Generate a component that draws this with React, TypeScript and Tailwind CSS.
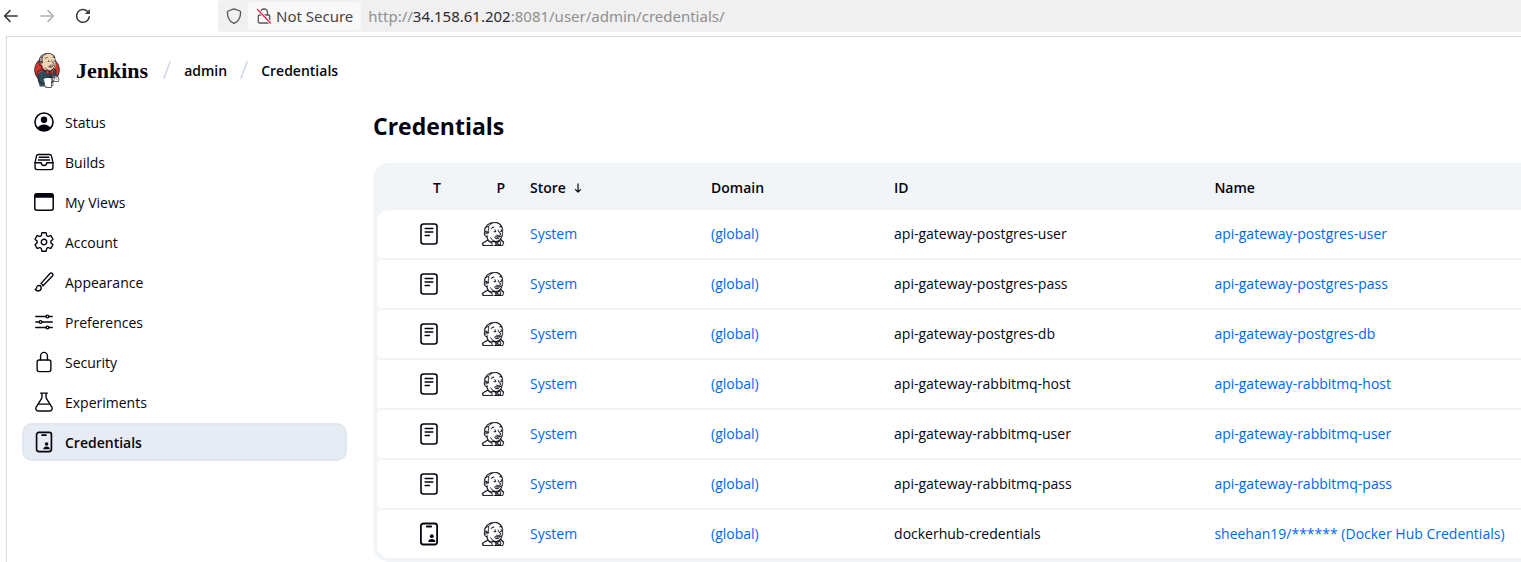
import type { ReactNode } from "react";
import { SiJenkins } from "react-icons/si";
import { DiJenkins } from "react-icons/di";
import {
  IoBrushOutline,
  IoFileTrayFullOutline,
  IoFlaskOutline,
  IoLockClosedOutline,
  IoOptionsOutline,
  IoSettingsOutline,
} from "react-icons/io5";

function BackIcon() {
  return (
    <svg width="16" height="16" viewBox="0 0 16 16" fill="none" stroke="#3a3a3e" strokeWidth="1.5" strokeLinecap="round" strokeLinejoin="round">
      <path d="M14.2 8H1.8M7 2.6 1.6 8 7 13.4" />
    </svg>
  );
}

function ForwardIcon() {
  return (
    <svg width="16" height="16" viewBox="0 0 16 16" fill="none" stroke="#b0b0b3" strokeWidth="1.5" strokeLinecap="round" strokeLinejoin="round">
      <path d="M1.8 8h12.4M9 2.6 14.4 8 9 13.4" />
    </svg>
  );
}

function ReloadIcon() {
  return (
    <svg width="16" height="16" viewBox="0 0 16 16" fill="none" stroke="#3a3a3e" strokeWidth="1.5" strokeLinecap="round">
      <path d="M14.3 8.8A6.4 6.4 0 1 1 12.4 3.3" />
      <path d="M14.9 1v4.6a.5.5 0 0 1-.5.5H9.8z" fill="#3a3a3e" stroke="none" />
    </svg>
  );
}

function ShieldIcon() {
  return (
    <svg width="16" height="16" viewBox="0 0 16 16" fill="none" stroke="#55555a" strokeWidth="1.3" strokeLinejoin="round">
      <path d="M8 .9 13.9 3a1 1 0 0 1 .7 1c0 5.5-1.8 9.3-6.1 11.2a1.2 1.2 0 0 1-1 0C3.2 13.3 1.4 9.5 1.4 4a1 1 0 0 1 .7-1z" />
    </svg>
  );
}

function InsecureIcon() {
  return (
    <svg width="16" height="16" viewBox="0 0 16 16" fill="none" strokeWidth="1.3" strokeLinecap="round">
      <path d="M4.5 7V4.5a3.5 3.5 0 0 1 7 0V7M3.5 7h9a1.2 1.2 0 0 1 1.2 1.2v5.6a1.2 1.2 0 0 1-1.2 1.2h-9a1.2 1.2 0 0 1-1.2-1.2V8.2A1.2 1.2 0 0 1 3.5 7z" stroke="#55555a" />
      <path d="M1.5 1.5 14.5 15" stroke="#f6f6f7" strokeWidth="3" />
      <path d="M1.5 1.5 14.5 15" stroke="#e22850" />
    </svg>
  );
}

function Mascot() {
  return (
    <span className="relative block size-[42px]">
      <svg className="absolute inset-0" width="42" height="42" viewBox="0 0 32 32">
        <circle cx="16" cy="16.2" r="9.5" fill="#d33833" />
        <path d="M8.7 19.5 13 16.2l9.5 0 1.5 4.5 1 3.3-5 1-.5 3.5H10.5L9 24z" fill="#335061" />
        <path d="M11.2 10.5C10.7 6 13.5 3.2 17 3.3c4.5 0 6 3.5 5.7 8-.2 3-1.5 5.7-5 5.5-2.7 0-4.7-1.8-5.2-4z" fill="#f0d6b7" />
        <path d="M11 11c-.6-3.5.6-6.3 3-7.3-1.3 1.6-1.5 3.6-1.3 6.3L12 12z" fill="#9a938c" />
        <path d="M15.5 16.2l2.5 1.2 2.7-1v3l-2.6-1-2.5 1z" fill="#d33833" />
        <path d="M13.2 22h6.4l-.4 7-4.7.5z" fill="#fff" />
        <path d="M20 21.3l3-.8 2.2.8-.4 2.8-3 .8-1.8-1z" fill="#fff" />
      </svg>
      <DiJenkins className="absolute inset-0 text-[#231f20]" size={42} />
    </span>
  );
}

function PersonIcon() {
  return (
    <svg width="22" height="22" viewBox="0 0 22 22">
      <circle cx="11" cy="11" r="9" fill="none" stroke="currentColor" strokeWidth="1.6" />
      <circle cx="11" cy="8.8" r="3.2" fill="currentColor" />
      <path d="M4.5 17.2c1.3-2.5 3.5-3.7 6.5-3.7s5.2 1.2 6.5 3.7a9 9 0 0 1-13 0z" fill="currentColor" />
    </svg>
  );
}

function WindowIcon() {
  return (
    <svg width="22" height="22" viewBox="0 0 22 22">
      <rect x="1.8" y="2.8" width="18.4" height="16.4" rx="2" fill="none" stroke="currentColor" strokeWidth="1.5" />
      <path d="M1.5 6.8V4.5a2 2 0 0 1 2-2h15a2 2 0 0 1 2 2v2.3z" fill="currentColor" />
    </svg>
  );
}

function BadgeIcon({ size = 22 }: { size?: number }) {
  return (
    <svg width={size} height={size} viewBox="0 0 24 24" fill="none" stroke="currentColor" strokeWidth="1.8" strokeLinecap="round">
      <rect x="3.9" y="1.5" width="16.2" height="21" rx="2.5" />
      <path d="M9.8 4.5h4.4" />
      <circle cx="14.8" cy="14.2" r="1.9" fill="currentColor" stroke="none" />
      <path d="M11.2 20c0-2 1.5-3.1 3.6-3.1s3.6 1.1 3.6 3.1z" fill="currentColor" stroke="none" />
    </svg>
  );
}

function SecretTextIcon() {
  return (
    <svg width="24" height="24" viewBox="0 0 24 24" fill="none" stroke="currentColor" strokeWidth="1.6" strokeLinecap="round">
      <rect x="4" y="2" width="16" height="20" rx="2.5" />
      <path d="M8.2 6.5h7.6M8.2 10h7.6M8.2 13.5h4.2" />
    </svg>
  );
}

function SortArrow() {
  return (
    <svg width="8" height="10" viewBox="0 0 8 10" fill="none" stroke="currentColor" strokeWidth="1.2" strokeLinecap="round" strokeLinejoin="round">
      <path d="M4 .8v8.2M1.5 6.7 4 9.2l2.5-2.5" />
    </svg>
  );
}

const tasks: { label: string; icon: ReactNode; active?: boolean }[] = [
  { label: "Status", icon: <PersonIcon /> },
  { label: "Builds", icon: <IoFileTrayFullOutline /> },
  { label: "My Views", icon: <WindowIcon /> },
  { label: "Account", icon: <IoSettingsOutline /> },
  { label: "Appearance", icon: <IoBrushOutline /> },
  { label: "Preferences", icon: <IoOptionsOutline /> },
  { label: "Security", icon: <IoLockClosedOutline /> },
  { label: "Experiments", icon: <IoFlaskOutline /> },
  { label: "Credentials", icon: <BadgeIcon />, active: true },
];

const credentials = [
  { id: "api-gateway-postgres-user", name: "api-gateway-postgres-user" },
  { id: "api-gateway-postgres-pass", name: "api-gateway-postgres-pass" },
  { id: "api-gateway-postgres-db", name: "api-gateway-postgres-db" },
  { id: "api-gateway-rabbitmq-host", name: "api-gateway-rabbitmq-host" },
  { id: "api-gateway-rabbitmq-user", name: "api-gateway-rabbitmq-user" },
  { id: "api-gateway-rabbitmq-pass", name: "api-gateway-rabbitmq-pass" },
  { id: "dockerhub-credentials", name: "sheehan19/****** (Docker Hub Credentials)", userPass: true },
];

function BrowserBar() {
  return (
    <div className="flex h-8 items-center bg-white font-['Noto_Sans',sans-serif] text-[15px]">
      <div className="flex w-[218px] shrink-0 items-center gap-5 pl-[3px]">
        <button aria-label="Back"><BackIcon /></button>
        <button aria-label="Forward"><ForwardIcon /></button>
        <button aria-label="Reload"><ReloadIcon /></button>
      </div>
      <div className="flex h-8 min-w-0 grow items-center rounded-l bg-[#f0f0f0] pl-2">
        <button aria-label="Tracking protection"><ShieldIcon /></button>
        <button className="ml-1.5 flex h-7 shrink-0 items-center gap-1 rounded bg-[#f9f9f9] px-2 text-[#45454a]">
          <InsecureIcon />
          Not Secure
        </button>
        <a href="#" className="ml-[7px] truncate text-[#8f8f92]">
          http://<span className="text-[#2b2a33]">34.158.61.202</span>:8081/user/admin/credentials/
        </a>
      </div>
    </div>
  );
}

function Slash() {
  return (
    <svg width="8" height="18" viewBox="0 0 8 18" stroke="#cdd6e4" strokeWidth="1.5" strokeLinecap="round">
      <path d="M7 1 1 17" />
    </svg>
  );
}

function Header() {
  return (
    <header className="flex h-[66px] items-center pl-[19px]">
      <a href="#" className="flex items-center gap-2">
        <Mascot />
        <span className="font-['Liberation_Serif',serif] text-[22px] font-bold">Jenkins</span>
      </a>
      <nav aria-label="Breadcrumb" className="ml-[15px] flex items-center gap-[13px] font-semibold">
        <Slash />
        <a href="#">admin</a>
        <Slash />
        <a href="#">Credentials</a>
      </nav>
    </header>
  );
}

function SideMenu() {
  return (
    <nav aria-label="Tasks" className="flex w-[325px] shrink-0 flex-col gap-0.5">
      {tasks.map((t) => (
        <a
          key={t.label}
          href="#"
          className={
            t.active
              ? "flex h-[38px] items-center gap-2.5 rounded-[10px] border-2 border-[#e1e7ee] bg-[#e7ebf3] pl-[9px] font-semibold"
              : "flex h-[38px] items-center gap-2.5 pl-[11px]"
          }
        >
          <span className="text-[22px]">{t.icon}</span>
          {t.label}
        </a>
      ))}
    </nav>
  );
}

function CredentialsTable() {
  return (
    <div className="rounded-l-[16px] bg-[#f2f5f8] py-0.5 pl-1">
      <table className="w-full table-fixed border-separate border-spacing-x-0 border-spacing-y-0.5">
        <colgroup>
          <col className="w-[76px]" />
          <col className="w-[65px]" />
          <col className="w-[16%]" />
          <col className="w-[16%]" />
          <col className="w-[28%]" />
          <col />
        </colgroup>
        <thead>
          <tr className="h-[41px] text-left">
            <th className="px-3 text-right font-semibold">T</th>
            <th className="px-[13px] text-right font-semibold">P</th>
            <th className="px-3 font-semibold">
              <span className="flex items-center gap-2">Store <SortArrow /></span>
            </th>
            <th className="px-2.5 font-semibold">Domain</th>
            <th className="px-2.5 font-semibold">ID</th>
            <th className="px-2.5 font-semibold">Name</th>
          </tr>
        </thead>
        <tbody>
          {credentials.map((c) => (
            <tr key={c.id} className="group h-12">
              <td className="rounded-l bg-white px-3 group-first:rounded-tl-[12px] group-last:rounded-bl-[12px]">
                <span className="flex justify-end">{c.userPass ? <BadgeIcon size={24} /> : <SecretTextIcon />}</span>
              </td>
              <td className="bg-white px-[13px]">
                <span className="flex justify-end">
                  <SiJenkins size={24} className="stroke-current stroke-[0.3]" />
                </span>
              </td>
              <td className="bg-white px-3 pb-0.5"><a href="#" className="text-[#0068f5]">System</a></td>
              <td className="bg-white px-2.5 pb-0.5"><a href="#" className="text-[#0068f5]">(global)</a></td>
              <td className="truncate bg-white px-2.5 pb-0.5">{c.id}</td>
              <td className="truncate bg-white px-2.5 pb-0.5"><a href="#" className="text-[#0068f5]">{c.name}</a></td>
            </tr>
          ))}
        </tbody>
      </table>
    </div>
  );
}

export default function App() {
  return (
    <div className="min-h-screen bg-white font-['Open_Sans',sans-serif] text-[14px] text-[#05050f]">
      <BrowserBar />
      <div className="ml-1.5 mt-1 border-l border-t border-[#dcdcde]">
        <Header />
        <div className="flex gap-[26px] pl-[15px]">
          <SideMenu />
          <main className="min-w-0 grow">
            <h1 className="mt-[7px] mb-[21px] text-[23px]/8 font-bold">Credentials</h1>
            <CredentialsTable />
          </main>
        </div>
      </div>
    </div>
  );
}
